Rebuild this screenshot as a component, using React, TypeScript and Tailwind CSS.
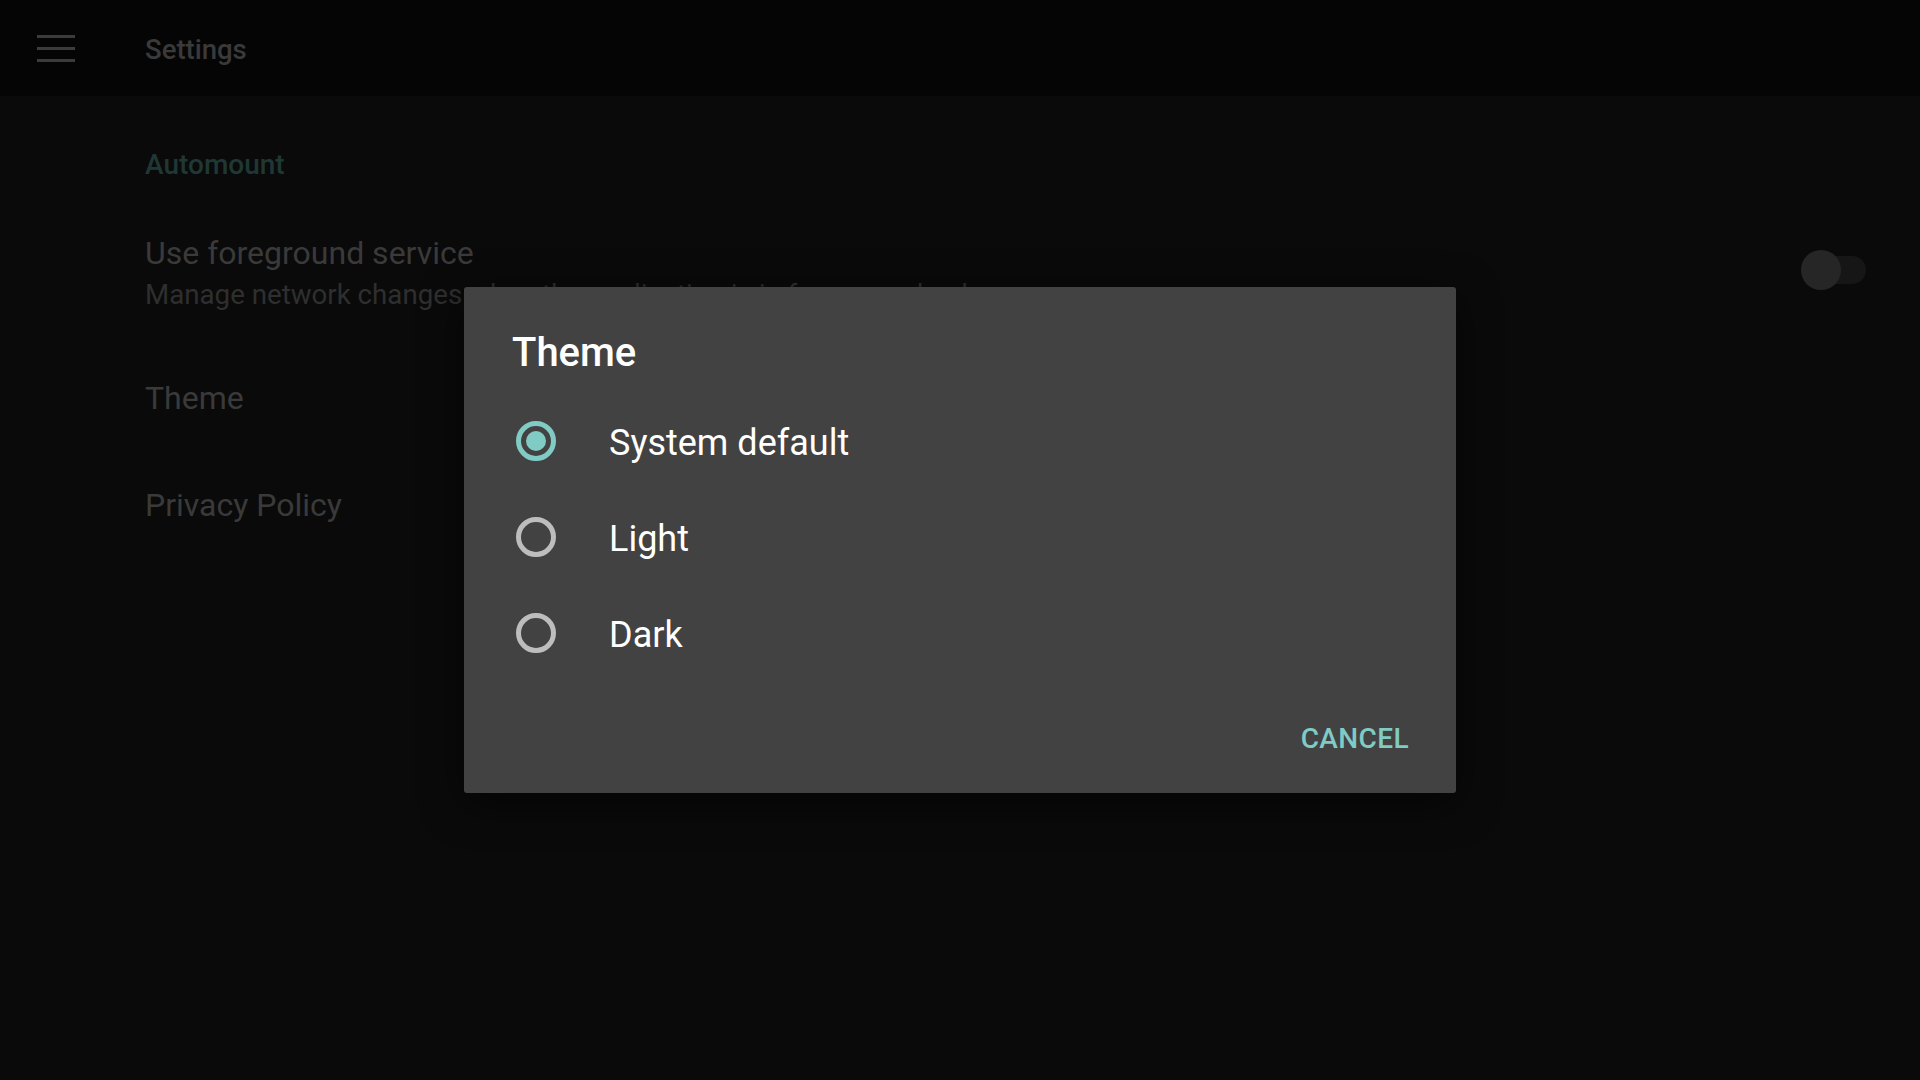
import React from "react";

function Radio({ checked }: { checked: boolean }) {
  return (
    <svg width="40" height="40" viewBox="0 0 40 40" className="shrink-0">
      <circle cx="20" cy="20" r="17.5" fill="none" stroke={checked ? "#80cbc4" : "#bdbdbd"} strokeWidth="5" />
      {checked && <circle cx="20" cy="20" r="10" fill="#80cbc4" />}
    </svg>
  );
}

export default function App() {
  const options = [
    { label: "System default", checked: true },
    { label: "Light", checked: false },
    { label: "Dark", checked: false },
  ];
  return (
    <div className="relative w-[1920px] h-[1080px] bg-[#0a0a0a] font-['Roboto','Liberation_Sans',sans-serif] overflow-hidden">
      {/* Toolbar */}
      <div className="h-24 bg-[#050505] flex items-center">
        <div className="ml-[37px] w-[38px] flex flex-col gap-[9px]">
          <div className="h-[3px] bg-[#3c3c3c]" />
          <div className="h-[3px] bg-[#3c3c3c]" />
          <div className="h-[3px] bg-[#3c3c3c]" />
        </div>
        <div className="ml-[70px] pt-[3px] text-[27.5px] leading-[36px] font-medium text-[#3a3a3a]">Settings</div>
      </div>

      {/* Preferences */}
      <div className="pl-[145px] pt-[53px] flex flex-col">
        <div className="text-[28px] leading-[32px] font-medium text-[#1f3835]">Automount</div>

        <div className="mt-[53px] flex items-center">
          <div className="flex-1 flex flex-col">
            <div className="text-[32px] leading-[38px] text-[#3a3a3a]">Use foreground service</div>
            <div className="mt-[7px] text-[27.7px] leading-[32px] text-[#2f2f2f]">
              Manage network changes when the application is in foreground only
            </div>
          </div>
          <div className="relative w-[65px] h-[40px] mr-[54px] mb-[5px] flex items-center">
            <div className="w-full h-[28px] rounded-full bg-[#161616]" />
            <div className="absolute left-0 top-0 w-[40px] h-[40px] rounded-full bg-[#262626]" />
          </div>
        </div>

        <div className="mt-[68px] text-[32px] leading-[38px] text-[#3a3a3a]">Theme</div>
        <div className="mt-[69px] text-[32px] leading-[38px] text-[#3a3a3a]">Privacy Policy</div>
      </div>

      {/* Dialog */}
      <div className="absolute inset-0 flex items-center justify-center">
        <div className="w-[992px] bg-[#424242] rounded-[3px] shadow-[0_10px_40px_rgba(0,0,0,0.6)] flex flex-col">
          <div className="pt-[43px] pl-[48px] text-[40px] leading-[46px] font-medium text-white">Theme</div>
          <div className="mt-[17px] flex flex-col">
            {options.map((o) => (
              <div key={o.label} className="h-[96px] flex items-center pl-[52px]">
                <Radio checked={o.checked} />
                <div className="ml-[53px] pt-[3px] text-[36px] leading-[44px] text-white">{o.label}</div>
              </div>
            ))}
          </div>
          <div className="mt-[44px] pb-[40px] pr-[47px] flex justify-end">
            <div className="text-[28px] leading-[28px] font-medium text-[#80cbc4] tracking-[0.4px]">CANCEL</div>
          </div>
        </div>
      </div>
    </div>
  );
}
